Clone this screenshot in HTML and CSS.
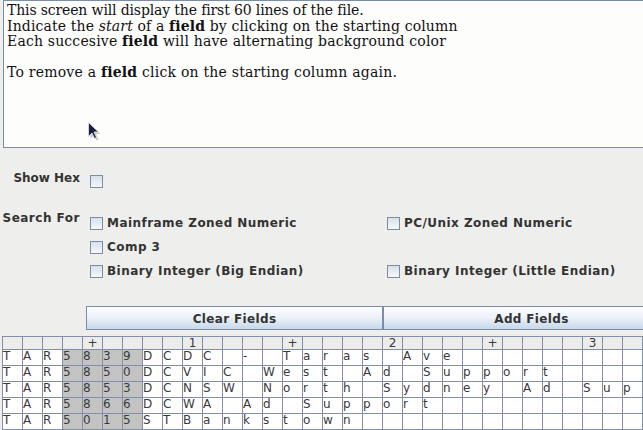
FILE: index.html
```html
<!DOCTYPE html>
<html>
<head>
<meta charset="utf-8">
<link rel="stylesheet" href="styles.css">
</head>
<body>
<div class="app">
  <div class="pane">
    <div class="doc">
      <div class="l1">This screen will display the first 60 lines of the file.</div>
      <div class="l2">Indicate the <i>start</i> of a <b>field</b> by clicking on the starting column</div>
      <div class="l3">Each succesive <b>field</b> will have alternating background color</div>
      <div>&nbsp;</div>
      <div class="l5">To remove a <b>field</b> click on the starting column again.</div>
    </div>
    <svg class="cursor" width="14" height="20" viewBox="0 0 14 20">
      <path d="M2.5 2.5 L2.5 16.5 L6 13 L8.5 18.5 L10.5 17.5 L8 12 L12.5 12 Z" fill="#9a9aa0" opacity="0.5" transform="translate(1,1)"/>
      <path d="M1.5 1.5 L1.5 15.5 L5 12 L7.5 17.5 L9.5 16.5 L7 11 L11.5 11 Z" fill="#1c1c3c" stroke="#e8e8f0" stroke-width="0.8"/>
    </svg>
  </div>

  <div class="options">
    <div class="lbl lbl-hex">Show Hex</div>
    <div class="opt"><span class="cb"></span></div>
    <div></div>

    <div class="lbl lbl-search">Search For</div>
    <div class="opt"><span class="cb"></span><span>Mainframe Zoned Numeric</span></div>
    <div class="opt"><span class="cb"></span><span>PC/Unix Zoned Numeric</span></div>

    <div></div>
    <div class="opt"><span class="cb"></span><span>Comp 3</span></div>
    <div></div>

    <div></div>
    <div class="opt"><span class="cb"></span><span>Binary Integer (Big Endian)</span></div>
    <div class="opt"><span class="cb"></span><span>Binary Integer (Little Endian)</span></div>
  </div>

  <div class="buttons">
    <div class="btn">Clear Fields</div>
    <div class="btn">Add Fields</div>
  </div>

  <div class="grid">
    <div class="h"></div><div class="h"></div><div class="h"></div><div class="h"></div><div class="h">+</div><div class="h"></div><div class="h"></div><div class="h"></div><div class="h"></div><div class="h">1</div><div class="h"></div><div class="h"></div><div class="h"></div><div class="h"></div><div class="h">+</div><div class="h"></div><div class="h"></div><div class="h"></div><div class="h"></div><div class="h">2</div><div class="h"></div><div class="h"></div><div class="h"></div><div class="h"></div><div class="h">+</div><div class="h"></div><div class="h"></div><div class="h"></div><div class="h"></div><div class="h">3</div><div class="h"></div><div class="h"></div>

    <div>T</div><div>A</div><div>R</div><div class="g">5</div><div class="g">8</div><div class="g">3</div><div class="g">9</div><div>D</div><div>C</div><div>D</div><div>C</div><div></div><div>-</div><div></div><div>T</div><div>a</div><div>r</div><div>a</div><div>s</div><div></div><div>A</div><div>v</div><div>e</div><div></div><div></div><div></div><div></div><div></div><div></div><div></div><div></div><div></div>

    <div>T</div><div>A</div><div>R</div><div class="g">5</div><div class="g">8</div><div class="g">5</div><div class="g">0</div><div>D</div><div>C</div><div>V</div><div>I</div><div>C</div><div></div><div>W</div><div>e</div><div>s</div><div>t</div><div></div><div>A</div><div>d</div><div></div><div>S</div><div>u</div><div>p</div><div>p</div><div>o</div><div>r</div><div>t</div><div></div><div></div><div></div><div></div>

    <div>T</div><div>A</div><div>R</div><div class="g">5</div><div class="g">8</div><div class="g">5</div><div class="g">3</div><div>D</div><div>C</div><div>N</div><div>S</div><div>W</div><div></div><div>N</div><div>o</div><div>r</div><div>t</div><div>h</div><div></div><div>S</div><div>y</div><div>d</div><div>n</div><div>e</div><div>y</div><div></div><div>A</div><div>d</div><div></div><div>S</div><div>u</div><div>p</div>

    <div>T</div><div>A</div><div>R</div><div class="g">5</div><div class="g">8</div><div class="g">6</div><div class="g">6</div><div>D</div><div>C</div><div>W</div><div>A</div><div></div><div>A</div><div>d</div><div></div><div>S</div><div>u</div><div>p</div><div>p</div><div>o</div><div>r</div><div>t</div><div></div><div></div><div></div><div></div><div></div><div></div><div></div><div></div><div></div><div></div>

    <div>T</div><div>A</div><div>R</div><div class="g">5</div><div class="g">0</div><div class="g">1</div><div class="g">5</div><div>S</div><div>T</div><div>B</div><div>a</div><div>n</div><div>k</div><div>s</div><div>t</div><div>o</div><div>w</div><div>n</div><div></div><div></div><div></div><div></div><div></div><div></div><div></div><div></div><div></div><div></div><div></div><div></div><div></div><div></div>
  </div>
</div>
</body>
</html>
```

FILE: styles.css
```css
html, body {
  margin: 0;
  padding: 0;
  background: #eeeeec;
  overflow: hidden;
}
.app {
  width: 700px;
  height: 430px;
  font-family: "DejaVu Sans", sans-serif;
  color: #333333;
}
.pane {
  position: relative;
  margin-left: 3px;
  height: 148px;
  border: 1px solid #7b8ca5;
  border-right: none;
  background: #fdfdfc;
  padding: 2px 0 0 3px;
  box-sizing: border-box;
}
.doc {
  font-family: "DejaVu Serif", serif;
  font-size: 14px;
  line-height: 15.6px;
  color: #111111;
  white-space: nowrap;
}
.l1 { letter-spacing: -0.14px; }
.l2 { letter-spacing: 0.14px; }
.l3 { letter-spacing: 0.18px; }
.l5 { letter-spacing: 0.22px; }
.cursor {
  position: absolute;
  left: 83px;
  top: 120px;
}
.options {
  display: grid;
  grid-template-columns: 90px 297px 1fr;
  grid-template-rows: 42px 24px 24px 24px;
  margin-top: 21px;
  font-size: 12px;
  font-weight: bold;
  line-height: 14px;
}
.lbl {
  text-align: right;
  padding-right: 10px;
}
.lbl-hex {
  padding-top: 2px;
}
.lbl-search {
  padding-top: 0;
  letter-spacing: 0.5px;
}
.opt {
  display: flex;
  align-items: center;
  gap: 4px;
  height: 14px;
  margin-top: 5px;
  letter-spacing: 0.45px;
}
.cb {
  display: block;
  width: 11px;
  height: 11px;
  border: 1px solid #7b8ca5;
  background: linear-gradient(#d6e0ec, #f6f8fa);
  flex: none;
}
.buttons {
  display: flex;
  margin-left: 86px;
  margin-top: 23px;
}
.btn {
  width: 295px;
  height: 22px;
  border: 1px solid #7b8ca5;
  background: linear-gradient(#fbfcfe 0%, #eef3f9 45%, #c7d7ea 100%);
  font-size: 12px;
  font-weight: bold;
  line-height: 24px;
  letter-spacing: 0.35px;
  text-align: center;
  color: #333333;
}
.grid {
  display: grid;
  grid-template-columns: repeat(32, 20px);
  grid-template-rows: 13px repeat(5, 16px);
  margin-left: 2px;
  margin-top: 6px;
  border-left: 1px solid #8190a8;
  border-top: 1px solid #8190a8;
  width: max-content;
  font-size: 12px;
  line-height: 12px;
  color: #3a3a3a;
}
.grid > div {
  border-right: 1px solid #8190a8;
  border-bottom: 1px solid #8190a8;
  background: #ffffff;
  padding-left: 0;
  overflow: hidden;
}
.grid > .h {
  background: #ececea;
  text-align: center;
  line-height: 12px;
}
.grid > .g {
  background: #c3c3c2;
}
```
